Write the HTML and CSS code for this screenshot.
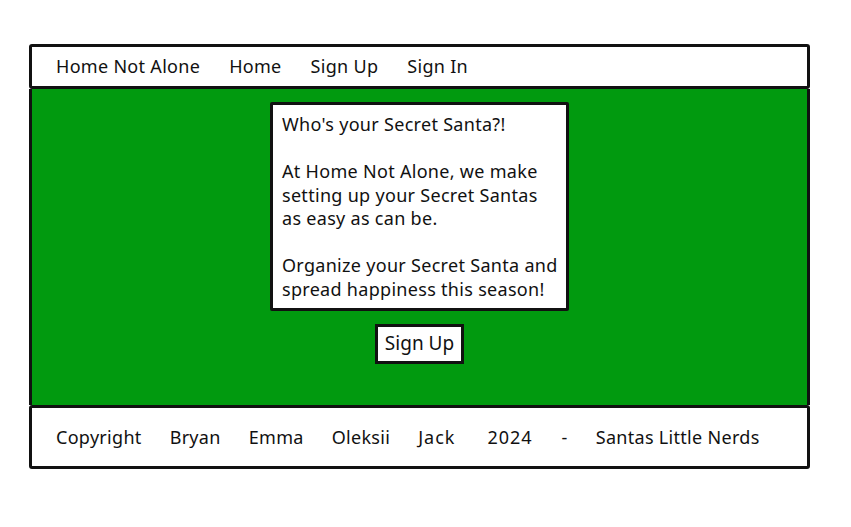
FILE: index.html
```html
<!DOCTYPE html>
<html>
<head>
<meta charset="utf-8">
<link rel="stylesheet" href="styles.css">
</head>
<body>
<div class="page">
  <header class="nav">
    <span>Home Not Alone</span>
    <span>Home</span>
    <span>Sign Up</span>
    <span>Sign In</span>
  </header>
  <main class="hero">
    <div class="card">
      <p>Who's your Secret Santa?!</p>
      <p>At Home Not Alone, we make setting up your Secret Santas as easy as can be.</p>
      <p>Organize your Secret Santa and spread happiness this season!</p>
    </div>
    <div class="btn">Sign Up</div>
  </main>
  <footer class="foot">
    <span>Copyright</span>
    <span>Bryan</span>
    <span>Emma</span>
    <span>Oleksii</span>
    <span class="wide">Jack</span>
    <span class="year">2024</span>
    <span>-</span>
    <span>Santas Little Nerds</span>
  </footer>
</div>
</body>
</html>
```

FILE: styles.css
```css
html, body {
  margin: 0;
  background: #fff;
}
body {
  font-family: "Noto Sans", "DejaVu Sans", sans-serif;
  font-size: 18px;
  letter-spacing: 0.3px;
  color: #111;
}
.page {
  width: 781px;
  padding: 44px 0 0 29px;
}
.nav {
  box-sizing: border-box;
  height: 45px;
  border: 3px solid #111;
  border-radius: 3px;
  display: flex;
  align-items: center;
  gap: 29px;
  padding-left: 24px;
  padding-bottom: 2px;
  background: #fff;
}
.hero {
  box-sizing: border-box;
  height: 316px;
  background: #019a0f;
  border-left: 3px solid #111;
  border-right: 3px solid #111;
  display: flex;
  flex-direction: column;
  align-items: center;
  padding-top: 13px;
}
.card {
  box-sizing: border-box;
  width: 299px;
  height: 209px;
  background: #fff;
  border: 3px solid #111;
  border-radius: 2px;
  padding: 8px 6px 0 9px;
  line-height: 23.5px;
}
.card p {
  margin: 0 0 23.5px 0;
}
.btn {
  margin-top: 13px;
  box-sizing: border-box;
  width: 89px;
  height: 40px;
  background: #fff;
  border: 3px solid #111;
  display: flex;
  align-items: center;
  justify-content: center;
  font-size: 19px;
  letter-spacing: 0;
  padding-bottom: 2px;
}
.foot {
  box-sizing: border-box;
  height: 64px;
  border: 3px solid #111;
  border-radius: 3px;
  display: flex;
  align-items: center;
  gap: 28px;
  padding-left: 24px;
  background: #fff;
}
.foot .wide {
  padding-right: 4px;
  letter-spacing: 1px;
}
.foot .year {
  padding-right: 1px;
  letter-spacing: 1px;
}
```
